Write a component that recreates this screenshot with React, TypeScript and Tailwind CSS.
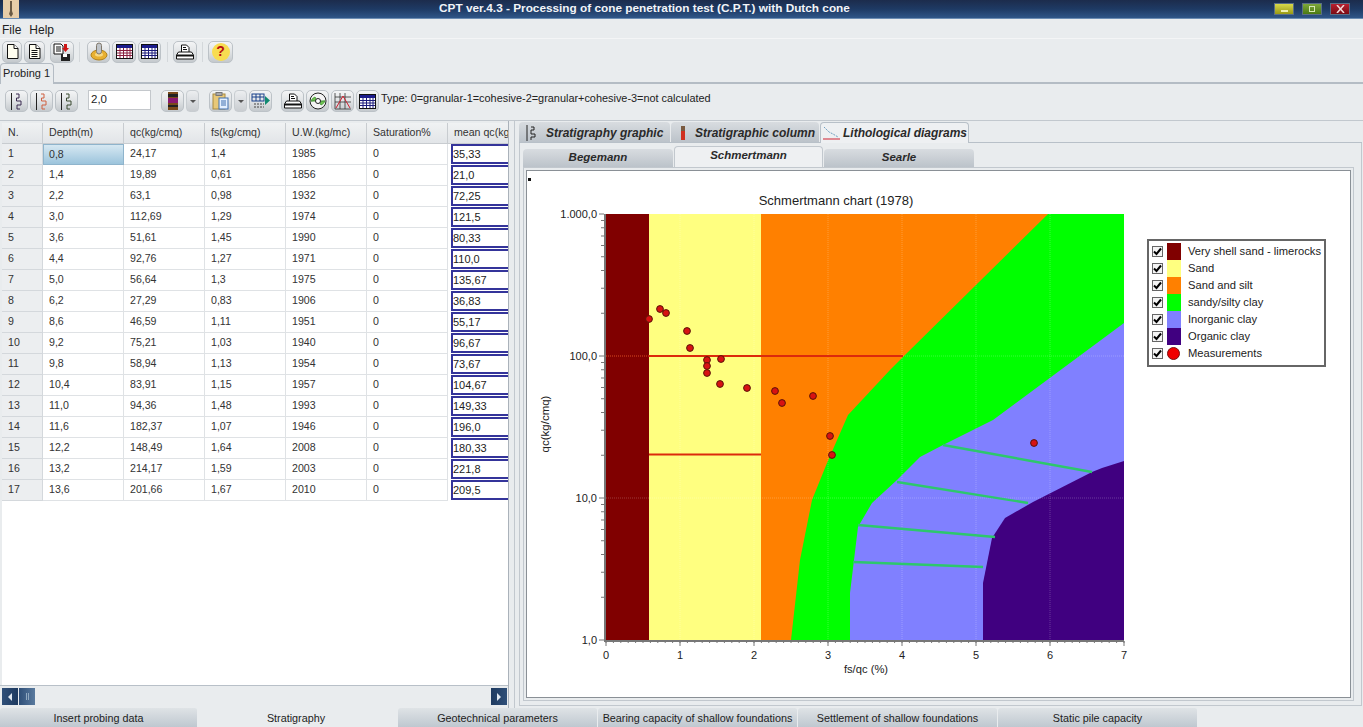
import React from 'react';

const rows = [
  ['1', '0,8', '24,17', '1,4', '1985', '0', '35,33'],
  ['2', '1,4', '19,89', '0,61', '1856', '0', '21,0'],
  ['3', '2,2', '63,1', '0,98', '1932', '0', '72,25'],
  ['4', '3,0', '112,69', '1,29', '1974', '0', '121,5'],
  ['5', '3,6', '51,61', '1,45', '1990', '0', '80,33'],
  ['6', '4,4', '92,76', '1,27', '1971', '0', '110,0'],
  ['7', '5,0', '56,64', '1,3', '1975', '0', '135,67'],
  ['8', '6,2', '27,29', '0,83', '1906', '0', '36,83'],
  ['9', '8,6', '46,59', '1,11', '1951', '0', '55,17'],
  ['10', '9,2', '75,21', '1,03', '1940', '0', '96,67'],
  ['11', '9,8', '58,94', '1,13', '1954', '0', '73,67'],
  ['12', '10,4', '83,91', '1,15', '1957', '0', '104,67'],
  ['13', '11,0', '94,36', '1,48', '1993', '0', '149,33'],
  ['14', '11,6', '182,37', '1,07', '1946', '0', '196,0'],
  ['15', '12,2', '148,49', '1,64', '2008', '0', '180,33'],
  ['16', '13,2', '214,17', '1,59', '2003', '0', '221,8'],
  ['17', '13,6', '201,66', '1,67', '2010', '0', '209,5'],
];

const headers = ['N.', 'Depth(m)', 'qc(kg/cmq)', 'fs(kg/cmq)', 'U.W.(kg/mc)', 'Saturation%', 'mean qc(kg/cmq)'];
const gridCols = 'grid grid-cols-[41px_81px_81px_81px_81px_81px_61px]';

const points = [
  [649, 319], [660, 309], [666, 313], [687, 331], [690, 348], [707, 360], [721, 359], [707, 366], [707, 373],
  [720, 384], [747, 388], [775, 391], [782, 403], [813, 396], [830, 436], [832, 455], [1034, 443],
];

const legend = [
  ['Very shell sand - limerocks', 'bg-[#800000]'],
  ['Sand', 'bg-[#ffff80]'],
  ['Sand and silt', 'bg-[#ff8000]'],
  ['sandy/silty clay', 'bg-[#00ff00]'],
  ['Inorganic clay', 'bg-[#8080ff]'],
  ['Organic clay', 'bg-[#400080]'],
];

const ZigZag = ({ color = '#3a2a50' }: { color?: string }) => (
  <svg width="14" height="17" viewBox="0 0 14 17" fill="none">
    <path d="M1.5 0v17" stroke="#222" />
    <path d="M6 1h3v4H6.5v3H11v4H7v4h3" stroke={color} />
  </svg>
);

const Sheet = ({ head = '#1c1c8c', cell = '#1c1c7c' }: { head?: string; cell?: string }) => (
  <svg width="17" height="15" viewBox="0 0 17 15">
    <rect x="0.5" y="0.5" width="16" height="14" fill="#fff" stroke="#111" />
    <rect x="1" y="1" width="15" height="3" fill={head} />
    <path d="M1 6.5h15M1 9h15M1 11.5h15M4 4v10M7.5 4v10M11 4v10M14 4v10" stroke={cell} strokeWidth="1" />
  </svg>
);

const Printer = () => (
  <svg width="18" height="16" viewBox="0 0 18 16" fill="none" stroke="#111">
    <path d="M5.5 8V1h5l2.5 2.5V8" fill="#fff" />
    <path d="M7 3.5h3M7 5.5h4" />
    <path d="M2.5 8h13l2 3v4H.5v-4z" fill="#fff" />
    <path d="M1 11.5h16" strokeWidth="2" />
  </svg>
);

const Doc = ({ lines }: { lines?: boolean }) => (
  <svg width="13" height="15" viewBox="0 0 13 15" stroke="#111" fill="#fffef0">
    <path d="M1.5 .5h6.5l4 4v10H1.5z" />
    <path d="M8 .5v4h4" fill="#fff" />
    {lines && <path d="M3.5 6.5h6M3.5 8.5h6M3.5 10.5h6M3.5 12.5h6" fill="none" />}
  </svg>
);

const ToolButton = ({ children, wide = 'w-[23px]' }: { children?: React.ReactNode; wide?: string }) => (
  <div className={`${wide} h-[22px] shrink-0 flex items-center justify-center rounded-[5px] border border-[#bcc2c7] bg-gradient-to-b from-[#f4f5f6] via-[#e0e3e5] to-[#c4c9cd]`}>
    {children}
  </div>
);

const DropButton = () => (
  <div className="w-[13px] h-[22px] shrink-0 flex items-center justify-center rounded-[4px] border border-[#c8cdd1] bg-gradient-to-b from-[#eceef0] to-[#c9cdd1]">
    <div className="w-0 h-0 border-l-[3px] border-r-[3px] border-t-[3px] border-l-transparent border-r-transparent border-t-[#555]" />
  </div>
);

const Sep = () => <div className="w-px h-[20px] bg-[#d4d8db] shrink-0" />;

const Chart = () => {
  const minorX: number[] = [];
  for (let i = 0; i <= 70; i++) minorX.push(606 + (i * 518) / 70);
  const minorY: number[] = [];
  [1, 10, 100].forEach((d) => {
    for (let m = 2; m <= 9; m++) minorY.push(640 - (Math.log10(d * m) * 426) / 3);
  });
  const labelsY: [string, number][] = [['1.000,0', 214], ['100,0', 356], ['10,0', 498], ['1,0', 640]];
  return (
    <svg width="615" height="526" viewBox="527 171 615 526" className="shrink-0" fontFamily="'Liberation Sans', sans-serif">
      <rect x="528" y="178" width="3" height="3" fill="#111" />
      <text x="836" y="205" fontSize="13" textAnchor="middle" fill="#222">Schmertmann chart (1978)</text>

      <rect x="606" y="214" width="518" height="426" fill="#ff8000" />
      <rect x="606" y="214" width="43" height="426" fill="#800000" />
      <rect x="649" y="214" width="112" height="426" fill="#ffff80" />
      <path d="M791 640L800 560L812 500L827 463L848 415L890 370L905 355L1048 214H1124V640Z" fill="#00ff00" />
      <path d="M850 640V593L858 527L872 503L897 480L920 457L943 445L993 420L1124 323V640Z" fill="#8080ff" />
      <path d="M983 640V583L992 538L1005 518L1033 502L1092 472L1102 468L1124 461V640Z" fill="#400080" />

      <g stroke="#ffffff" strokeOpacity="0.22" strokeDasharray="1 1">
        {[680, 754, 828, 902, 976, 1050].map((x) => <path key={x} d={`M${x} 214V640`} />)}
        <path d="M606 498H1124" />
        <path d="M903 356H1124" />
      </g>
      <path d="M606 356H649" stroke="#d84a20" strokeDasharray="1 1" />

      <g stroke="#2dc76c" strokeWidth="2.4">
        <path d="M943 445L1092 472" />
        <path d="M897 482L1028 503" />
        <path d="M858 525L995 537" />
        <path d="M853 562L983 567" />
      </g>
      <g stroke="#dc2a0c" strokeWidth="2">
        <path d="M649 356H903" />
        <path d="M649 454.5H761" />
      </g>

      {points.map(([x, y]) => (
        <circle key={`${x}-${y}`} cx={x} cy={y} r="3.4" fill="#d81212" stroke="#5a1408" />
      ))}

      <path d="M605 214V641H1124" fill="none" stroke="#777" strokeWidth="2" />
      <g stroke="#777">
        {minorX.map((x) => <path key={x} d={`M${x} 641V643`} />)}
        {[0, 1, 2, 3, 4, 5, 6, 7].map((i) => <path key={i} d={`M${606 + i * 74} 641V646`} />)}
        {minorY.map((y) => <path key={y} d={`M601 ${y}H604`} />)}
        {labelsY.map(([l, y]) => <path key={l} d={`M599 ${y}H604`} />)}
      </g>
      <g fontSize="11" fill="#222">
        {labelsY.map(([l, y]) => <text key={l} x="597" y={y + 4} textAnchor="end">{l}</text>)}
        {[0, 1, 2, 3, 4, 5, 6, 7].map((i) => <text key={i} x={606 + i * 74} y="659" textAnchor="middle">{i}</text>)}
      </g>
      <text x="866" y="673" fontSize="11.2" textAnchor="middle" fill="#222">fs/qc (%)</text>
      <text x="0" y="0" fontSize="11.5" textAnchor="middle" fill="#222" transform="translate(549 424) rotate(-90)">qc(kg/cmq)</text>
    </svg>
  );
};

const Check = () => (
  <div className="w-[11px] h-[11px] shrink-0 border border-[#666] bg-[#f4f4f4] flex items-center justify-center">
    <svg width="9" height="9" viewBox="0 0 9 9" fill="none" stroke="#000" strokeWidth="2"><path d="M1 4.5L3.5 7L8 1.5" /></svg>
  </div>
);

const Legend = () => (
  <div className="self-start mt-[68px] ml-[5px] w-[179px] h-[128px] border-2 border-[#666] bg-white flex flex-col py-[2px] pl-[3px] text-[11.2px] text-[#222]">
    {legend.map(([label, swatch]) => (
      <div key={label} className="h-[17px] flex items-center">
        <Check />
        <div className={`w-[14px] h-[17px] ml-[4px] ${swatch}`} />
        <span className="ml-[7px] whitespace-nowrap">{label}</span>
      </div>
    ))}
    <div className="h-[17px] flex items-center">
      <Check />
      <div className="w-[13px] h-[13px] ml-[4px] rounded-full bg-[#f00000] border border-[#7a1010]" />
      <span className="ml-[8px]">Measurements</span>
    </div>
  </div>
);

export default function App() {
  return (
    <div className="w-[1363px] h-[727px] overflow-hidden flex flex-col bg-[#e9ecee] text-[#222] font-['Liberation_Sans',sans-serif]">
      {/* title bar */}
      <div className="h-[19px] shrink-0 relative flex items-center justify-center pr-[74px] bg-gradient-to-b from-[#1c2c4c] via-[#1e3a64] to-[#2f5688] border-b border-[#6c8db3]">
        <div className="absolute left-[3px] top-0 w-[16px] h-[18px] bg-[#e8cda8] flex justify-center">
          <svg width="8" height="18" viewBox="0 0 8 18"><path d="M3 1h2v10l1 3-2 3-2-3 1-3z" fill="#6b5a44" /></svg>
        </div>
        <span className="text-[11.8px] font-bold text-[#f2f4f8] whitespace-nowrap">CPT ver.4.3 - Processing of cone penetration test (C.P.T.) with Dutch cone</span>
        <div className="absolute right-[13px] top-[3px] flex gap-[8px]">
          <div className="w-[20px] h-[12px] border border-[#5b6f86] bg-gradient-to-b from-[#d9d94a] to-[#9a9a12] flex items-center justify-center pt-[3px]">
            <div className="w-[7px] h-[2px] bg-[#f0f0b0]" />
          </div>
          <div className="w-[20px] h-[12px] border border-[#5b6f86] bg-gradient-to-b from-[#7fa83a] to-[#4a7a12] flex items-center justify-center">
            <div className="w-[6px] h-[6px] border border-[#d8e8b8]" />
          </div>
          <div className="w-[20px] h-[12px] border border-[#5b6f86] bg-gradient-to-b from-[#b82030] to-[#7a0c14] flex items-center justify-center">
            <svg width="9" height="8" viewBox="0 0 9 8" stroke="#f4d8d8" strokeWidth="1.5"><path d="M1 0l7 8M8 0L1 8" /></svg>
          </div>
        </div>
      </div>

      {/* menu */}
      <div className="h-[20px] shrink-0 flex items-center gap-[8px] pl-[2px] pt-[2px] text-[12px] text-[#222] border-b border-[#f4f5f6]">
        <span>File</span>
        <span>Help</span>
      </div>

      {/* main toolbar */}
      <div className="h-[25px] shrink-0 flex items-center pl-[2px] gap-[2px]">
        <ToolButton wide="w-[20px]"><Doc /></ToolButton>
        <ToolButton wide="w-[21px]"><Doc lines /></ToolButton>
        <div className="w-px" />
        <ToolButton wide="w-[24px]">
          <svg width="18" height="18" viewBox="0 0 18 18">
            <path d="M1 1h7l2 2v8H1z" fill="#fff" stroke="#111" />
            <path d="M3 4h5M3 6h5M3 8h5" stroke="#111" />
            <path d="M11 1h3v4h2l-3.5 4L9 5h2z" fill="#d01818" />
            <rect x="8" y="11" width="9" height="7" fill="#222" />
            <rect x="10" y="11" width="4" height="3" fill="#fff" />
          </svg>
        </ToolButton>
        <div className="w-px" /><Sep /><div className="w-[3px]" />
        <ToolButton>
          <svg width="18" height="19" viewBox="0 0 18 19">
            <ellipse cx="9" cy="13" rx="8" ry="5" fill="#e8b030" stroke="#b08018" />
            <ellipse cx="9" cy="12.5" rx="4" ry="2" fill="#f8d880" />
            <rect x="6.5" y="1" width="5" height="11" rx="2.5" fill="#bfc4c9" stroke="#80786a" />
          </svg>
        </ToolButton>
        <ToolButton wide="w-[24px]"><Sheet cell="#8a2040" /></ToolButton>
        <ToolButton><Sheet /></ToolButton>
        <div className="w-[2px]" /><Sep /><div className="w-[1px]" />
        <ToolButton wide="w-[24px]"><Printer /></ToolButton>
        <div className="w-[1px]" /><Sep /><div className="w-[1px]" />
        <ToolButton wide="w-[25px]">
          <div className="w-[18px] h-[18px] rounded-full bg-[#f8dc50] flex items-center justify-center text-[14px] font-bold text-[#b81010]">?</div>
        </ToolButton>
      </div>

      {/* probing tab */}
      <div className="h-[20px] shrink-0 flex items-end border-b-2 border-[#b4bcc4]">
        <div className="w-[54px] h-[21px] -mb-[2px] rounded-t-[4px] border border-b-0 border-[#b4bcc4] bg-[#e9ecee] flex items-center pl-[2px] pb-[2px] text-[11px] whitespace-nowrap">Probing 1</div>
      </div>

      {/* probing content */}
      <div className="flex-1 min-h-0 flex flex-col">
        <div className="h-[37px] shrink-0 flex pt-[6px] pl-[5px] gap-[2px] border-b border-[#c2c8ce]">
          <ToolButton><ZigZag /></ToolButton>
          <ToolButton><ZigZag color="#d06040" /></ToolButton>
          <ToolButton><ZigZag color="#3a4a30" /></ToolButton>
          <div className="ml-[8px] mr-[8px] w-[63px] h-[20px] border border-[#c4c8cc] bg-white text-[11.5px] flex items-center pl-[2px]">2,0</div>
          <ToolButton>
            <svg width="10" height="18" viewBox="0 0 10 18">
              <rect width="10" height="18" fill="#7a4a1a" /><rect y="2" width="10" height="3" fill="#222" />
              <rect y="6" width="10" height="5" fill="#8a1870" /><rect y="13" width="10" height="2" fill="#222" />
            </svg>
          </ToolButton>
          <DropButton />
          <div className="w-[6px]" />
          <ToolButton>
            <svg width="17" height="18" viewBox="0 0 17 18">
              <rect x="1" y="2" width="12" height="15" fill="#e8c878" stroke="#a88a40" />
              <rect x="4" y="0.5" width="6" height="3" fill="#aaa" stroke="#777" />
              <rect x="7" y="6" width="9" height="11" fill="#e4f0ff" stroke="#4070b0" />
              <path d="M9 9h5M9 11h5M9 13h5" stroke="#4070b0" />
            </svg>
          </ToolButton>
          <DropButton />
          <ToolButton>
            <svg width="20" height="16" viewBox="0 0 20 16" fill="none">
              <rect x="1" y="1" width="12" height="7" stroke="#18408a" />
              <path d="M1 4h12M5 1v7M9 1v7" stroke="#18408a" />
              <path d="M3 11h10M3 14h10" stroke="#444" strokeDasharray="2 1" />
              <path d="M14 3l5 4.5-5 4.5z" fill="#108a70" />
            </svg>
          </ToolButton>
          <div className="w-[5px]" />
          <ToolButton><Printer /></ToolButton>
          <ToolButton>
            <svg width="18" height="18" viewBox="0 0 18 18">
              <circle cx="9" cy="9" r="8" fill="#f4f4f4" stroke="#222" />
              <path d="M2 9a7 7 0 0 1 4-4l1.5 3zM16 9a7 7 0 0 1-4 4l-1.5-3zM2 9h5M11 9h5" fill="#70c850" stroke="#50a040" />
              <circle cx="9" cy="9" r="2.5" fill="#fff" stroke="#222" />
            </svg>
          </ToolButton>
          <ToolButton>
            <svg width="18" height="18" viewBox="0 0 18 18" fill="none">
              <path d="M1 1v16h16M1 5h16M1 10h16M6 1v16M11 1v16" stroke="#333" strokeWidth="0.8" />
              <path d="M2 16L9 4l7 12" stroke="#d02030" />
            </svg>
          </ToolButton>
          <ToolButton><Sheet /></ToolButton>
          <span className="text-[10.9px] leading-none mt-[3px] whitespace-nowrap">Type: 0=granular-1=cohesive-2=granular+cohesive-3=not calculated</span>
        </div>

        <div className="flex-1 min-h-0 flex">
          {/* left table */}
          <div className="w-[509px] shrink-0 flex flex-col border-r border-[#aab2ba] pt-[2px]">
            <div className="flex-1 min-h-0 ml-[2px] bg-white overflow-hidden text-[10.6px] text-[#333]">
              <div className={`${gridCols} h-[21px] bg-gradient-to-b from-[#f0f2f3] to-[#e2e5e8] border-b border-[#c8ccd0]`}>
                {headers.map((h) => (
                  <div key={h} className="flex items-center pl-[6px] border-r border-[#c8ccd0] overflow-hidden whitespace-nowrap">{h}</div>
                ))}
              </div>
              {rows.map((r, i) => (
                <div key={r[0]} className={`${gridCols} h-[21px]`}>
                  {r.map((v, j) => {
                    let cls = 'flex items-center pl-[6px] border-r border-b border-[#dfe2e5]';
                    if (j === 0) cls = 'flex items-center pl-[6px] border-r border-b border-[#d4d8dc] bg-[#eceef0]';
                    if (j === 6) cls = 'flex items-center ml-[3px] h-[20px] border-l-2 border-y-2 border-[#34349a] text-[11px] text-[#222]';
                    if (i === 0 && j === 1) cls = 'flex items-center pl-[5px] border border-[#8fb4cc] bg-gradient-to-b from-[#d6e8f2] to-[#9cc4dc]';
                    return <div key={j} className={cls}>{v}</div>;
                  })}
                </div>
              ))}
            </div>
            <div className="h-[23px] shrink-0 flex items-start pt-[2px] justify-between pl-[2px] pr-[1px] border-t border-[#b8c0c8]">
              <div className="flex gap-px">
                <div className="w-[16px] h-[17px] bg-gradient-to-r from-[#2f4f78] to-[#1e3a60] flex items-center justify-center">
                  <div className="w-0 h-0 border-y-[4px] border-r-[4px] border-y-transparent border-r-[#e0e8f0]" />
                </div>
                <div className="w-[16px] h-[17px] bg-gradient-to-r from-[#2f4f78] to-[#5a7a9e] flex items-center justify-center">
                  <div className="w-[3px] h-[7px] border-x border-[#90a8c0]" />
                </div>
              </div>
              <div className="w-[16px] h-[17px] bg-gradient-to-r from-[#1e3a60] to-[#2f4f78] flex items-center justify-center">
                <div className="w-0 h-0 border-y-[4px] border-l-[4px] border-y-transparent border-l-[#e0e8f0]" />
              </div>
            </div>
          </div>

          <div className="w-[6px] shrink-0 border-r border-[#c2c8ce]" />

          {/* right panel */}
          <div className="flex-1 min-w-0 flex flex-col pl-[4px] pr-[1px] pb-[2px]">
            <div className="h-[22px] shrink-0 flex items-end gap-px text-[12px] font-bold italic text-[#2a2a2a] border-b border-[#b8c0c8]">
              <div className="w-[151px] h-[20px] rounded-t-[4px] flex items-center gap-[9px] pl-[7px] pt-[2px] bg-gradient-to-b from-[#d8dce0] to-[#bcc3ca] whitespace-nowrap">
                <svg width="11" height="16" viewBox="0 0 11 16" fill="none" stroke="#222"><path d="M1 0v16M5 2h3v3H5v4h4v3H5v3" /></svg>
                Stratigraphy graphic
              </div>
              <div className="w-[148px] h-[20px] rounded-t-[4px] flex items-center gap-[8px] pl-[9px] pt-[2px] bg-gradient-to-b from-[#d8dce0] to-[#bcc3ca] whitespace-nowrap">
                <svg width="7" height="16" viewBox="0 0 7 16"><rect x="1" y="1" width="4" height="5" fill="#7a5a40" /><rect x="1" y="6" width="4" height="9" fill="#d03020" /></svg>
                Stratigraphic column
              </div>
              <div className="w-[149px] h-[21px] -mb-px rounded-t-[4px] border border-b-0 border-[#b8c0c8] flex items-center gap-[3px] pl-[2px] bg-[#eef0f2] whitespace-nowrap">
                <svg width="17" height="14" viewBox="0 0 17 14" fill="none"><path d="M1 1l5 5 4 2 5 3" stroke="#70a0c0" strokeDasharray="2 1" /><path d="M0 13h17" stroke="#d02030" /></svg>
                Lithological diagrams
              </div>
            </div>
            <div className="flex-1 min-h-0 flex flex-col border border-[#c2c8ce] border-t-0 p-[3px]">
              <div className="h-[21px] shrink-0 flex items-end gap-px text-[11.5px] font-bold italic text-[#2a2a2a]">
                <div className="w-[150px] h-[18px] rounded-t-[4px] flex items-center justify-center bg-gradient-to-b from-[#d8dce0] to-[#bcc3ca]">Begemann</div>
                <div className="w-[149px] h-[21px] rounded-t-[4px] border border-b-0 border-[#c2c8ce] flex items-center justify-center pb-[2px] bg-[#eef0f2]">Schmertmann</div>
                <div className="w-[150px] h-[18px] rounded-t-[4px] flex items-center justify-center bg-gradient-to-b from-[#d8dce0] to-[#bcc3ca]">Searle</div>
              </div>
              <div className="flex-1 min-h-0 border border-[#c2c8ce] p-[2px] mr-[4px] mb-[1px]">
                <div className="h-full border border-[#8a9096] bg-white flex overflow-hidden">
                  <Chart />
                  <Legend />
                </div>
              </div>
            </div>
          </div>
        </div>
      </div>

      {/* bottom tabs */}
      <div className="h-[19px] shrink-0 flex text-[10.8px] text-[#222]">
        {['Insert probing data', 'Stratigraphy', 'Geotechnical parameters', 'Bearing capacity of shallow foundations', 'Settlement of shallow foundations', 'Static pile capacity'].map((t, i) => (
          t === 'Stratigraphy'
            ? <div key={t} className="w-[200px] h-[20px] -mt-px rounded-t-[3px] flex items-center justify-center pt-[3px] pr-[4px] bg-[#e9ecee]">{t}</div>
            : <div key={t} className={`${i === 0 ? 'w-[198px]' : 'w-[200px]'} h-[19px] rounded-t-[3px] border-r border-[#e9ecee] flex items-center justify-center pt-px whitespace-nowrap bg-gradient-to-b from-[#dfe3e6] to-[#bfc8d0]`}>{t}</div>
        ))}
      </div>
    </div>
  );
}
